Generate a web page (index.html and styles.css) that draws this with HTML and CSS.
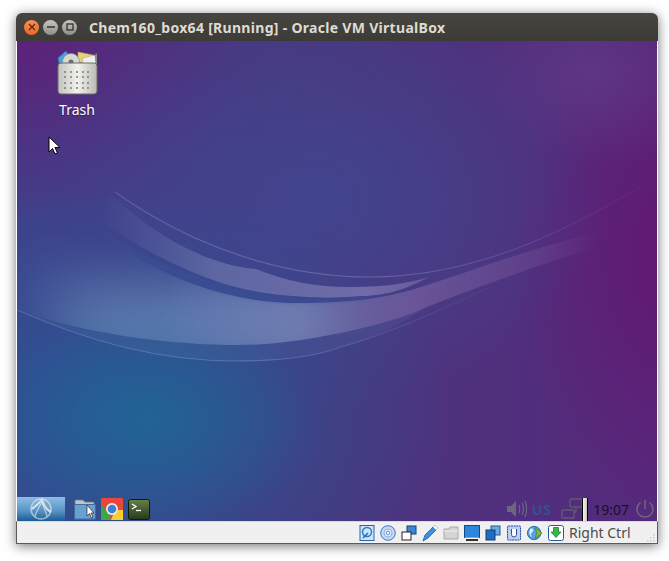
FILE: index.html
```html
<!DOCTYPE html>
<html lang="en">
<head>
    <meta charset="UTF-8">
    <title>Chem160_box64 [Running] - Oracle VM VirtualBox</title>
    <link rel="stylesheet" href="styles.css">
</head>
<body>
<div class="window">
    <div class="titlebar">
        <div class="win-buttons">
            <span class="win-btn close"><svg width="8" height="8" viewBox="0 0 8 8"><path d="M1 1L7 7M7 1L1 7" stroke="#5a2a10" stroke-width="1.3"/></svg></span>
            <span class="win-btn"><svg width="8" height="8" viewBox="0 0 8 8"><path d="M0 4H8" stroke="#3c3b37" stroke-width="1.6"/></svg></span>
            <span class="win-btn"><svg width="8" height="8" viewBox="0 0 8 8"><rect x="1" y="1" width="6" height="6" fill="none" stroke="#3c3b37" stroke-width="1.4"/></svg></span>
        </div>
        <div class="win-title">Chem160_box64 [Running] - Oracle VM VirtualBox</div>
    </div>

    <div class="desktop">
        <!-- wallpaper swooshes -->
        <svg class="waves" width="640" height="480" viewBox="17 41 640 480">
            <defs>
                <linearGradient id="tail" gradientUnits="userSpaceOnUse" x1="170" x2="600" y1="0" y2="0">
                    <stop offset="0" stop-color="#9a9ac8" stop-opacity="0"/>
                    <stop offset="0.3" stop-color="#9a9ac8" stop-opacity="0.36"/>
                    <stop offset="0.55" stop-color="#a184b8" stop-opacity="0.38"/>
                    <stop offset="0.85" stop-color="#9a70ac" stop-opacity="0.2"/>
                    <stop offset="1" stop-color="#9a70ac" stop-opacity="0"/>
                </linearGradient>
                <linearGradient id="midBand" gradientUnits="userSpaceOnUse" x1="100" x2="430" y1="0" y2="0">
                    <stop offset="0" stop-color="#8a90c4" stop-opacity="0"/>
                    <stop offset="0.35" stop-color="#9a9fcb" stop-opacity="0.36"/>
                    <stop offset="0.8" stop-color="#a69fcd" stop-opacity="0.46"/>
                    <stop offset="1" stop-color="#a69fcd" stop-opacity="0.3"/>
                </linearGradient>
                <linearGradient id="thin" x1="0" x2="1" y1="0" y2="0">
                    <stop offset="0" stop-color="#b4b8e0" stop-opacity="0.25"/>
                    <stop offset="0.5" stop-color="#b4b8e0" stop-opacity="0.3"/>
                    <stop offset="1" stop-color="#b4b8e0" stop-opacity="0.04"/>
                </linearGradient>
                <filter id="soft"><feGaussianBlur stdDeviation="0.6"/></filter>
                <filter id="glow" x="-50%" y="-50%" width="200%" height="200%"><feGaussianBlur stdDeviation="26"/></filter>
                <filter id="shade" x="-10%" y="-30%" width="120%" height="160%"><feGaussianBlur stdDeviation="1.5"/></filter>
                <clipPath id="underBig">
                    <path d="M17 180L90 225C160 280 230 303 299 303C350 303 390 298 427 285C480 268 540 245 597 233L593 248C530 268 470 290 427 307C390 325 300 345 239 345C170 345 90 335 17 310Z"/>
                </clipPath>
            </defs>
            <g clip-path="url(#underBig)">
                <ellipse cx="195" cy="322" rx="150" ry="42" fill="#7596c2" opacity=".62" filter="url(#glow)"/>
                <ellipse cx="70" cy="285" rx="60" ry="24" fill="#6f83bb" opacity=".22" filter="url(#glow)"/>
                <rect x="17" y="180" width="640" height="180" fill="url(#tail)"/>
            </g>
            <path d="M17 310C90 335 170 345 239 345C300 345 390 325 427 307C400 325 380 335 341 347C320 355 290 361 235 361C160 361 90 342 17 310Z" fill="#8fb0d8" opacity=".08"/>
            <path d="M17 310C90 342 160 361 235 361C290 361 320 355 341 347C400 330 450 305 490 287" fill="none" stroke="url(#thin)" stroke-width="1.1"/>
            <path d="M90 223C150 275 230 305 299 304C350 304 395 297 430 285C400 296 350 299 307 298C230 293 150 265 90 223Z" fill="#3a5aa0" opacity=".3" filter="url(#shade)"/>
            <path d="M111 195C160 240 210 265 256 269C290 283 325 288 354 287C385 287 410 283 429 277C410 287 390 296 360 296C340 298 320 298 307 297C270 295 240 290 213 280C170 265 125 240 94 215Z" fill="url(#midBand)" filter="url(#soft)"/>
            <path d="M115 192C190 245 280 277 370 277C470 277 560 235 640 187" fill="none" stroke="url(#thin)" stroke-width="1.1"/>
        </svg>

        <div class="desk-icon">
            <svg width="42" height="46" viewBox="0 0 42 46">
                <defs>
                    <linearGradient id="trashBody" x1="0" x2="1" y1="0" y2="0">
                        <stop offset="0" stop-color="#c2c2be"/>
                        <stop offset="0.5" stop-color="#f1f1ee"/>
                        <stop offset="1" stop-color="#b8b8b4"/>
                    </linearGradient>
                </defs>
                <path d="M2 8L10 1L14 8L9 16L3 13Z" fill="#4f9fdc" stroke="#2f78b4" stroke-width=".6"/>
                <path d="M22 2L37 5L35 14L22 12Z" fill="#e3d276" stroke="#b5a552" stroke-width=".6"/>
                <circle cx="15" cy="12" r="8.500" fill="#d8d8d4" stroke="#8d8d88" stroke-width=".6"/>
                <circle cx="15" cy="12" r="2.500" fill="#6c6c68"/>
                <path d="M27 8L39 5L40 14L33 20L26 15Z" fill="#eeeeea" stroke="#a8a8a3" stroke-width=".6"/>
                <path d="M39.500 3.500H41V14H39.500Z" fill="#8a8a85"/>
                <rect x="2" y="13" width="39" height="31" rx="3" fill="url(#trashBody)" stroke="#6c6c68" stroke-width="1"/>
                <g fill="#7c7c75">
                    <circle cx="9" cy="22" r="1"/><circle cx="15" cy="22" r="1"/><circle cx="21" cy="22" r="1"/><circle cx="27" cy="22" r="1"/><circle cx="32" cy="22" r="1"/>
                    <circle cx="9" cy="27" r="1"/><circle cx="15" cy="27" r="1"/><circle cx="21" cy="27" r="1"/><circle cx="27" cy="27" r="1"/><circle cx="32" cy="27" r="1"/>
                    <circle cx="9" cy="33" r="1"/><circle cx="15" cy="33" r="1"/><circle cx="21" cy="33" r="1"/><circle cx="27" cy="33" r="1"/><circle cx="32" cy="33" r="1"/>
                    <circle cx="9" cy="38" r="1"/><circle cx="15" cy="38" r="1"/><circle cx="21" cy="38" r="1"/><circle cx="27" cy="38" r="1"/><circle cx="32" cy="38" r="1"/>
                </g>
            </svg>
            <span class="desk-label">Trash</span>
        </div>

        <svg class="mouse" width="14" height="20" viewBox="0 0 14 20"><path d="M1 1V16L4.500 12.500L7 18L9.500 17L7 11.500H12Z" fill="#fff" stroke="#000" stroke-width="1"/></svg>

        <div class="panel">
            <div class="panel-left">
                <div class="start-btn">
                    <svg width="24" height="24" viewBox="0 0 24 24" fill="none" stroke="#dfe8f0">
                        <circle cx="12" cy="12" r="10" stroke-width="1.500" opacity=".65"/>
                        <path d="M3 12C7 9 10 6 13 3C15 9 18 13 22 15" stroke-width="2.200" opacity=".9"/>
                        <path d="M13 5C10 10 7 15 6 19M13 6C15 11 17 15 18 19" stroke-width="1.200" opacity=".7"/>
                    </svg>
                </div>
                <div class="launchers">
                    <svg width="22" height="24" viewBox="0 0 22 24">
                        <path d="M1 3H9L11 5H20V22H1Z" fill="#bcc4cc" stroke="#6d7680" stroke-width=".8"/>
                        <rect x=".5" y="7.500" width="21" height="14.500" fill="#6aa0cf" stroke="#3c6f9e"/>
                        <path d="M13 8V19L15.500 16.500L17.500 21L19 20L17 16H20Z" fill="#fff" stroke="#222" stroke-width=".7"/>
                    </svg>
                    <svg width="22" height="22" viewBox="0 0 22 22">
                        <rect x="0" y="0" width="22" height="22" rx="1" fill="#e8463a"/>
                        <path d="M0 22V6L8 16L10 22Z" fill="#3fa548"/>
                        <path d="M10 22L14 12H22V22Z" fill="#f8cf2e"/>
                        <circle cx="11" cy="11" r="6" fill="#e8edf3"/>
                        <circle cx="11" cy="11" r="4.300" fill="#3a7fd0"/>
                    </svg>
                    <svg width="22" height="21" viewBox="0 0 22 21">
                        <defs>
                            <linearGradient id="term" x1="0" x2="0" y1="0" y2="1">
                                <stop offset="0" stop-color="#64824a"/>
                                <stop offset="1" stop-color="#26381a"/>
                            </linearGradient>
                        </defs>
                        <rect x=".5" y=".5" width="21" height="20" rx="2" fill="url(#term)" stroke="#111a0b"/>
                        <path d="M4 5L8 7.500L4 10" fill="none" stroke="#fff" stroke-width="1.300"/>
                        <path d="M8 11.500H13" stroke="#fff" stroke-width="1.300"/>
                    </svg>
                </div>
            </div>
            <div class="panel-right">
                <svg width="22" height="22" viewBox="0 0 22 22" fill="none" stroke="#6a6680" stroke-width="1.200">
                    <path d="M1 8H5L10 3V19L5 14H1Z" fill="#6a6680" stroke="none"/>
                    <path d="M13 7C14 10 14 12 13 15M16 5C18 9 18 13 16 17M19 3C21 8 21 14 19 19"/>
                </svg>
                <span class="tray-lang">US</span>
                <svg width="22" height="24" viewBox="0 0 22 24" fill="none" stroke="#5f5b70" stroke-width="1.400">
                    <rect x="9" y="2" width="12" height="8" rx="1"/>
                    <rect x="1" y="13" width="12" height="8" rx="1"/>
                    <path d="M15 10V15H13"/>
                </svg>
                <div class="tray-meter"></div>
                <span class="tray-clock">19:07</span>
                <svg width="20" height="20" viewBox="0 0 20 20" fill="none" stroke="#6e6a74" stroke-width="1.500">
                    <path d="M5.500 3.500A8 8 0 1 0 14.500 3.500"/>
                    <path d="M10 1V10"/>
                </svg>
            </div>
        </div>
    </div>

    <div class="statusbar">
        <div class="status-icons">
            <svg width="16" height="18" viewBox="0 0 16 18">
                <rect x="1" y="1.500" width="14" height="15" fill="#cfe4f7" stroke="#1f66b3"/>
                <circle cx="8" cy="8" r="4.500" fill="none" stroke="#2f7bc4" stroke-width="1.500"/>
                <path d="M4 14L9 9" stroke="#1f66b3" stroke-width="1.500"/>
            </svg>
            <svg width="16" height="18" viewBox="0 0 16 18">
                <circle cx="8" cy="9" r="7.300" fill="#c7d8f3" stroke="#3a76c8"/>
                <circle cx="8" cy="9" r="4" fill="#eef3fb" stroke="#8fb0e0"/>
                <circle cx="8" cy="9" r="1.800" fill="#fff" stroke="#3a76c8" stroke-width=".8"/>
            </svg>
            <svg width="16" height="18" viewBox="0 0 16 18">
                <rect x="6" y="2" width="9" height="8" fill="#3f87d6" stroke="#123f78"/>
                <rect x="1" y="8" width="9" height="8" fill="#fff" stroke="#222"/>
            </svg>
            <svg width="16" height="18" viewBox="0 0 16 18">
                <path d="M1 17L3 11L11 3L14 6L6 14Z" fill="#3f8fe0" stroke="#1c5ea8" stroke-width=".8"/>
                <path d="M11 3L13 1L16 4L14 6Z" fill="#fff" stroke="#8aa" stroke-width=".6"/>
            </svg>
            <svg width="16" height="18" viewBox="0 0 16 18">
                <path d="M1 5H6L7 3H15V15H1Z" fill="#d4d4d2" stroke="#a8a8a6"/>
                <path d="M1 7H15" stroke="#efefed"/>
            </svg>
            <svg width="16" height="18" viewBox="0 0 16 18">
                <rect x=".5" y="1.500" width="15" height="12" fill="#2d86dc" stroke="#124a85"/>
                <path d="M2 15H14V17H2Z" fill="#333"/>
                <path d="M1 14H15" stroke="#fff"/>
            </svg>
            <svg width="16" height="18" viewBox="0 0 16 18">
                <rect x="6" y="2" width="9" height="9" fill="#6fa9e4" stroke="#245a98"/>
                <rect x="1" y="6" width="9" height="10" fill="#1f6cc0" stroke="#123f78"/>
            </svg>
            <svg width="16" height="18" viewBox="0 0 16 18">
                <rect x="1.500" y="2" width="13" height="14" rx="1" fill="#bcd0ef" stroke="#2a4da0" stroke-dasharray="2 .6"/>
                <path d="M5.500 5V10.500A2.500 2.500 0 0 0 10.500 10.500V5" fill="#fff" stroke="#2a4da0"/>
            </svg>
            <svg width="16" height="18" viewBox="0 0 18 18">
                <circle cx="8" cy="9" r="7.500" fill="#5b9fe0" stroke="#20609f"/>
                <path d="M4 4C7 3 8 6 6 8C4 9 4 12 6 14C2 12 2 7 4 4Z" fill="#d8ecf9"/>
                <path d="M9 3L17 9L9 15L11 9Z" fill="#7fbe3a" stroke="#3f7a14" stroke-width=".7"/>
            </svg>
            <svg width="16" height="18" viewBox="0 0 16 18">
                <rect x=".5" y="1.500" width="15" height="15" rx="2" fill="#fff" stroke="#245a98"/>
                <path d="M5.500 3.500H10.500V8H13L8 13.500L3 8H5.500Z" fill="#39b54a" stroke="#1d6d28" stroke-width=".7"/>
            </svg>
        </div>
        <span class="host-key">Right Ctrl</span>
        <svg class="grip" width="12" height="10" viewBox="0 0 12 10" fill="#c9c9c7">
            <rect x="9" y="1" width="1.500" height="1.500"/>
            <rect x="6" y="4" width="1.500" height="1.500"/><rect x="9" y="4" width="1.500" height="1.500"/>
            <rect x="3" y="7" width="1.500" height="1.500"/><rect x="6" y="7" width="1.500" height="1.500"/><rect x="9" y="7" width="1.500" height="1.500"/>
        </svg>
    </div>
</div>
</body>
</html>
```

FILE: styles.css
```css
html, body {
    margin: 0;
    padding: 0;
    width: 669px;
    height: 561px;
    overflow: hidden;
    background-color: #fff;
}

.window {
    display: flex;
    flex-direction: column;
    width: 642px;
    height: 531px;
    margin: 13px 0 0 16px;
    border-radius: 6px 6px 0 0;
    box-shadow: 0 2px 12px rgba(0, 0, 0, 0.55);
}

.titlebar {
    display: flex;
    align-items: center;
    height: 28px;
    padding-left: 8px;
    flex: none;
    border-radius: 6px 6px 0 0;
    background: linear-gradient(#46453f, #3c3b37);
}

.win-buttons {
    display: flex;
    gap: 4px;
}

.win-btn {
    display: flex;
    align-items: center;
    justify-content: center;
    width: 15px;
    height: 15px;
    border-radius: 50%;
    background: linear-gradient(#c6c5bf, #8f8e88);
}

.win-btn.close {
    background: linear-gradient(#f7914f, #e9682a);
}

.win-title {
    margin-left: 12px;
    font: bold 14px "Noto Sans", sans-serif;
    letter-spacing: 0.3px;
    color: #dfdbd2;
}

.desktop {
    position: relative;
    display: flex;
    flex-direction: column;
    justify-content: flex-end;
    flex: 1;
    margin: 0 1px 0 1px;
    overflow: hidden;
    background:
        radial-gradient(170px 120px at 21% 79%, rgba(30, 105, 150, 0.75), rgba(30, 105, 150, 0)),
        radial-gradient(340px 230px at 15% 78%, rgba(38, 88, 150, 0.85), rgba(38, 88, 150, 0)),
        radial-gradient(290px 210px at 47% 33%, rgba(64, 72, 145, 0.85), rgba(64, 72, 145, 0)),
        radial-gradient(120px 90px at 90% 7%, rgba(100, 62, 140, 0.6), rgba(100, 62, 140, 0)),
        radial-gradient(160px 260px at 102% 45%, rgba(100, 22, 114, 0.9), rgba(100, 22, 114, 0)),
        radial-gradient(260px 180px at 0% 0%, rgba(96, 30, 120, 0.9), rgba(96, 30, 120, 0)),
        linear-gradient(90deg, #40408a 0%, #49377f 45%, #56297c 100%);
}

.waves {
    position: absolute;
    left: 0;
    top: 0;
}

.desk-icon {
    position: absolute;
    left: 30px;
    top: 9px;
    display: flex;
    flex-direction: column;
    align-items: center;
    width: 60px;
}

.desk-label {
    margin-top: 4px;
    font: 14px "Noto Sans", sans-serif;
    color: #fff;
    text-shadow: 0 1px 1px rgba(0, 0, 0, 0.4);
}

.mouse {
    position: absolute;
    left: 31px;
    top: 95px;
}

.panel {
    position: relative;
    display: flex;
    justify-content: space-between;
    align-items: center;
    height: 24px;
}

.panel-left {
    display: flex;
    align-items: center;
}

.start-btn {
    display: flex;
    align-items: center;
    justify-content: center;
    width: 48px;
    height: 24px;
    background: linear-gradient(#8dbce2, #5b97c9 55%, #1c5c92);
}

.launchers {
    display: flex;
    align-items: center;
    gap: 5px;
    margin-left: 9px;
}

.panel-right {
    display: flex;
    align-items: center;
    padding-right: 2px;
}

.tray-lang {
    margin: 0 10px 0 4px;
    font: bold 15px "Noto Sans", sans-serif;
    color: #33508f;
}

.tray-meter {
    width: 4px;
    height: 23px;
    margin-left: -1px;
    border: 1px solid #000;
    border-width: 0 1px;
    background: linear-gradient(90deg, #f4f4ee, #c8c8c0);
}

.tray-clock {
    margin: 0 6px 0 5px;
    font: 14px "Noto Sans", sans-serif;
    color: #17102a;
}

.statusbar {
    display: flex;
    align-items: center;
    flex: none;
    height: 21px;
    padding-left: 342px;
    border: 1px solid #5a5a5a;
    border-top: 1px solid #d8d8d8;
    background-color: #f0f0f0;
}

.status-icons {
    display: flex;
    align-items: center;
    gap: 5px;
}

.host-key {
    margin-left: 5px;
    font: 14px "Noto Sans", sans-serif;
    color: #4c4c4c;
}

.grip {
    margin-left: auto;
    margin-right: 1px;
    align-self: flex-end;
}
```
